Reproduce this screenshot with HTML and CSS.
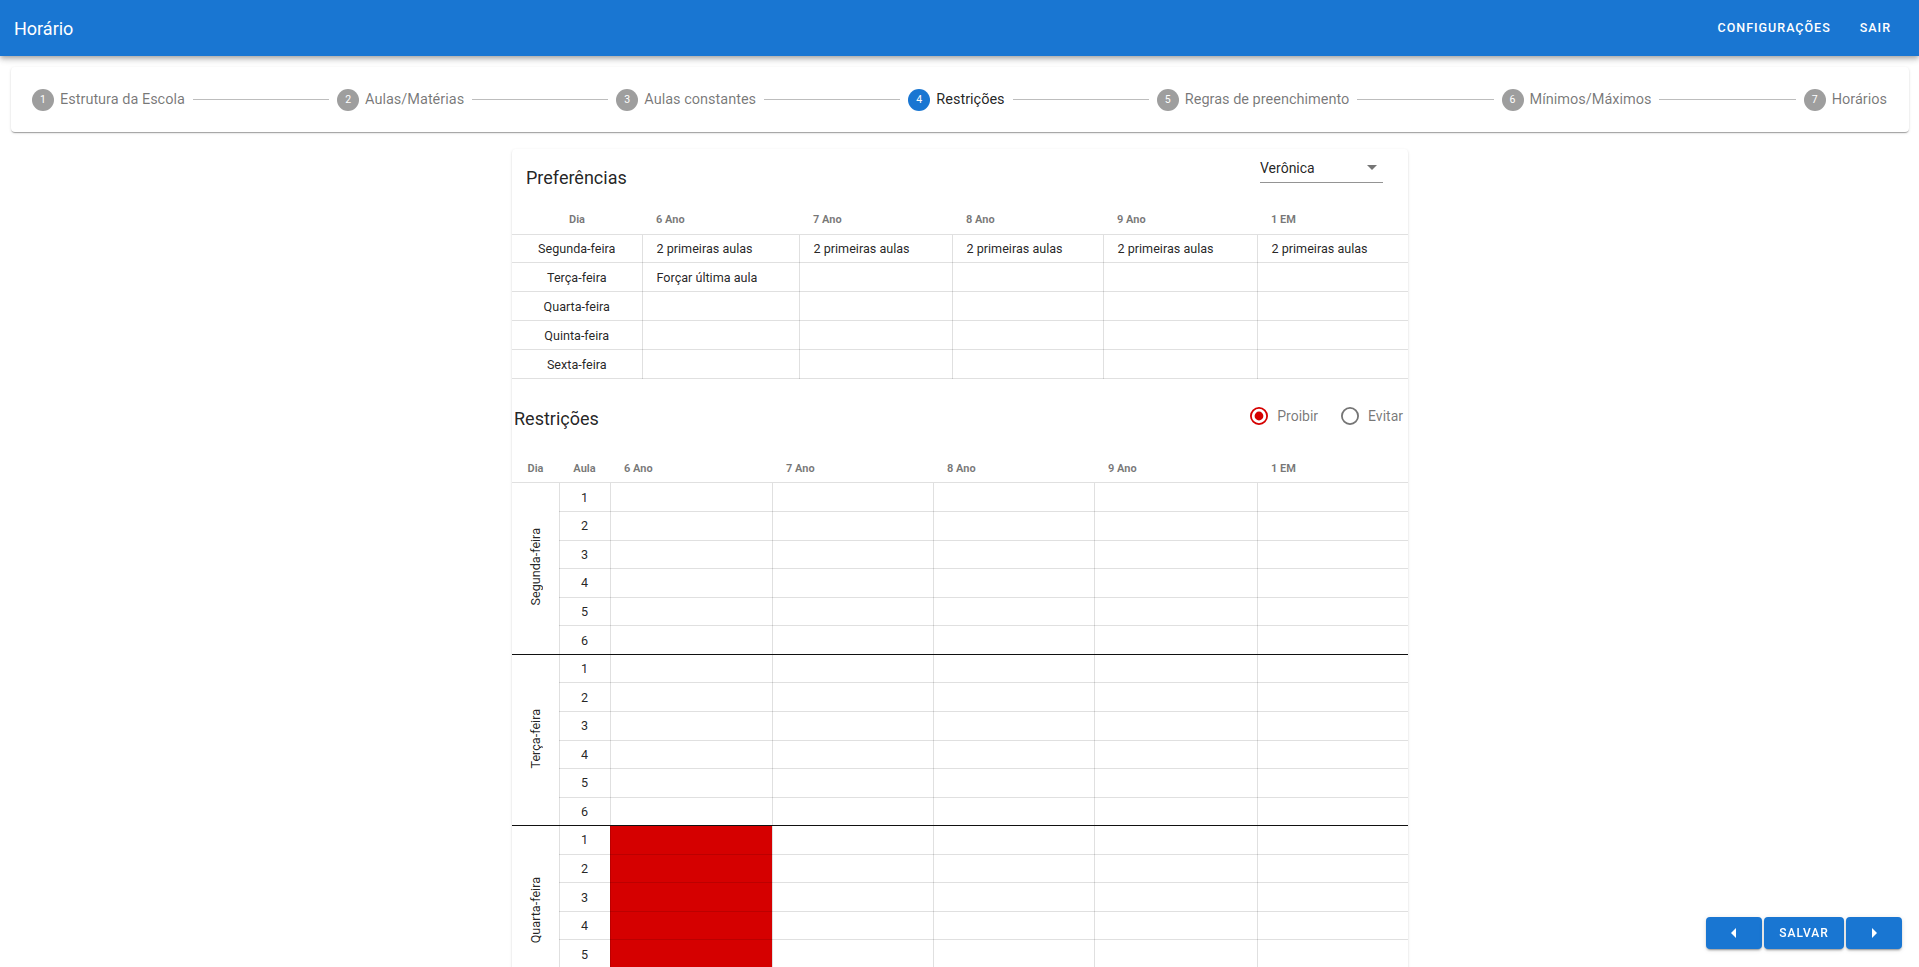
FILE: index.html
```html
<!DOCTYPE html>
<html lang="pt-BR">
<head>
<meta charset="utf-8">
<title>Horário</title>
<link rel="stylesheet" href="styles.css">
</head>
<body>
<header class="appbar">
  <div class="app-title">Horário</div>
  <nav class="app-nav">
    <button class="nav-btn">Configurações</button>
    <button class="nav-btn">Sair</button>
  </nav>
</header>

<main class="page">
  <div class="stepper">
    <div class="step"><span class="step-icon">1</span><span class="step-label">Estrutura da Escola</span></div>
    <div class="connector"></div>
    <div class="step"><span class="step-icon">2</span><span class="step-label">Aulas/Matérias</span></div>
    <div class="connector"></div>
    <div class="step"><span class="step-icon">3</span><span class="step-label">Aulas constantes</span></div>
    <div class="connector"></div>
    <div class="step active"><span class="step-icon">4</span><span class="step-label">Restrições</span></div>
    <div class="connector"></div>
    <div class="step"><span class="step-icon">5</span><span class="step-label">Regras de preenchimento</span></div>
    <div class="connector"></div>
    <div class="step"><span class="step-icon">6</span><span class="step-label">Mínimos/Máximos</span></div>
    <div class="connector"></div>
    <div class="step"><span class="step-icon">7</span><span class="step-label">Horários</span></div>
  </div>

  <section class="card">
    <div class="pref-head">
      <h2 class="section-title">Preferências</h2>
      <div class="select">
        <span class="select-value">Verônica</span>
        <svg class="select-arrow" width="10" height="5" viewBox="0 0 10 5"><path d="M0 0l5 5 5-5z"/></svg>
      </div>
    </div>

    <table class="pref-table">
      <thead>
        <tr>
          <th class="center">Dia</th><th>6 Ano</th><th>7 Ano</th><th>8 Ano</th><th>9 Ano</th><th>1 EM</th>
        </tr>
      </thead>
      <tbody>
        <tr><td class="center">Segunda-feira</td><td>2 primeiras aulas</td><td>2 primeiras aulas</td><td>2 primeiras aulas</td><td>2 primeiras aulas</td><td>2 primeiras aulas</td></tr>
        <tr><td class="center">Terça-feira</td><td>Forçar última aula</td><td></td><td></td><td></td><td></td></tr>
        <tr><td class="center">Quarta-feira</td><td></td><td></td><td></td><td></td><td></td></tr>
        <tr><td class="center">Quinta-feira</td><td></td><td></td><td></td><td></td><td></td></tr>
        <tr><td class="center">Sexta-feira</td><td></td><td></td><td></td><td></td><td></td></tr>
      </tbody>
    </table>

    <div class="restr-head">
      <h2 class="section-title restr-title">Restrições</h2>
      <div class="radios">
        <label class="radio checked">
          <svg width="18" height="18" viewBox="0 0 18 18"><circle cx="9" cy="9" r="8.1" fill="none" stroke="#d50000" stroke-width="1.8"/><circle cx="9" cy="9" r="4.4" fill="#d50000"/></svg>
          <span>Proibir</span>
        </label>
        <label class="radio">
          <svg width="18" height="18" viewBox="0 0 18 18"><circle cx="9" cy="9" r="8.1" fill="none" stroke="#757575" stroke-width="1.8"/></svg>
          <span>Evitar</span>
        </label>
      </div>
    </div>

    <table class="restr-table">
      <thead>
        <tr><th class="center">Dia</th><th class="center">Aula</th><th>6 Ano</th><th>7 Ano</th><th>8 Ano</th><th>9 Ano</th><th>1 EM</th></tr>
      </thead>
      <tbody>
        <tr><td class="day" rowspan="6"><span>Segunda-feira</span></td><td class="num">1</td><td></td><td></td><td></td><td></td><td></td></tr>
        <tr><td class="num">2</td><td></td><td></td><td></td><td></td><td></td></tr>
        <tr><td class="num">3</td><td></td><td></td><td></td><td></td><td></td></tr>
        <tr><td class="num">4</td><td></td><td></td><td></td><td></td><td></td></tr>
        <tr><td class="num">5</td><td></td><td></td><td></td><td></td><td></td></tr>
        <tr class="end"><td class="num">6</td><td></td><td></td><td></td><td></td><td></td></tr>

        <tr><td class="day" rowspan="6"><span>Terça-feira</span></td><td class="num">1</td><td></td><td></td><td></td><td></td><td></td></tr>
        <tr><td class="num">2</td><td></td><td></td><td></td><td></td><td></td></tr>
        <tr><td class="num">3</td><td></td><td></td><td></td><td></td><td></td></tr>
        <tr><td class="num">4</td><td></td><td></td><td></td><td></td><td></td></tr>
        <tr><td class="num">5</td><td></td><td></td><td></td><td></td><td></td></tr>
        <tr class="end"><td class="num">6</td><td></td><td></td><td></td><td></td><td></td></tr>

        <tr><td class="day" rowspan="6"><span>Quarta-feira</span></td><td class="num">1</td><td class="blocked"></td><td></td><td></td><td></td><td></td></tr>
        <tr><td class="num">2</td><td class="blocked"></td><td></td><td></td><td></td><td></td></tr>
        <tr><td class="num">3</td><td class="blocked"></td><td></td><td></td><td></td><td></td></tr>
        <tr><td class="num">4</td><td class="blocked"></td><td></td><td></td><td></td><td></td></tr>
        <tr><td class="num">5</td><td class="blocked"></td><td></td><td></td><td></td><td></td></tr>
        <tr class="end"><td class="num">6</td><td class="blocked"></td><td></td><td></td><td></td><td></td></tr>

        <tr><td class="day" rowspan="6"><span>Quinta-feira</span></td><td class="num">1</td><td></td><td></td><td></td><td></td><td></td></tr>
        <tr><td class="num">2</td><td></td><td></td><td></td><td></td><td></td></tr>
        <tr><td class="num">3</td><td></td><td></td><td></td><td></td><td></td></tr>
        <tr><td class="num">4</td><td></td><td></td><td></td><td></td><td></td></tr>
        <tr><td class="num">5</td><td></td><td></td><td></td><td></td><td></td></tr>
        <tr class="end"><td class="num">6</td><td></td><td></td><td></td><td></td><td></td></tr>

        <tr><td class="day" rowspan="6"><span>Sexta-feira</span></td><td class="num">1</td><td></td><td></td><td></td><td></td><td></td></tr>
        <tr><td class="num">2</td><td></td><td></td><td></td><td></td><td></td></tr>
        <tr><td class="num">3</td><td></td><td></td><td></td><td></td><td></td></tr>
        <tr><td class="num">4</td><td></td><td></td><td></td><td></td><td></td></tr>
        <tr><td class="num">5</td><td></td><td></td><td></td><td></td><td></td></tr>
        <tr class="end"><td class="num">6</td><td></td><td></td><td></td><td></td><td></td></tr>
      </tbody>
    </table>
  </section>
</main>

<div class="fab-group">
  <button class="fab fab-icon" aria-label="Anterior">
    <svg width="24" height="24" viewBox="0 0 24 24"><path d="M14 7l-5 5 5 5V7z" fill="#fff"/></svg>
  </button>
  <button class="fab fab-save">Salvar</button>
  <button class="fab fab-icon" aria-label="Próximo">
    <svg width="24" height="24" viewBox="0 0 24 24"><path d="M10 17l5-5-5-5v10z" fill="#fff"/></svg>
  </button>
</div>
</body>
</html>
```

FILE: styles.css
```css
* { box-sizing: border-box; }

html, body {
  margin: 0;
  padding: 0;
}

body {
  font-family: Roboto, "Noto Sans", "Liberation Sans", Arial, sans-serif;
  color: rgba(0, 0, 0, 0.87);
  background: #fff;
}

/* ---------- App bar ---------- */
.appbar {
  position: relative;
  z-index: 3;
  height: 56px;
  display: flex;
  align-items: center;
  padding: 0 20px 0 14px;
  background: #1976d2;
  color: #fff;
  box-shadow: 0 2px 4px -1px rgba(0,0,0,.2), 0 4px 5px 0 rgba(0,0,0,.14), 0 1px 10px 0 rgba(0,0,0,.12);
}

.app-title {
  flex: 1;
  font-size: 18px;
  font-weight: 400;
}

.app-nav {
  display: flex;
  gap: 13px;
}

.nav-btn {
  background: none;
  border: 0;
  color: #fff;
  font-family: Roboto, "Noto Sans", Arial, sans-serif;
  font-size: 12.5px;
  font-weight: 500;
  letter-spacing: 1px;
  text-transform: uppercase;
  padding: 6px 8px;
  line-height: 20px;
}

/* ---------- Page ---------- */
.page {
  padding: 11px 10px 40px 11px;
}

/* ---------- Stepper ---------- */
.stepper {
  height: 65px;
  display: flex;
  align-items: center;
  padding: 0 14px 0 13px;
  background: #fff;
  border-radius: 4px;
  box-shadow: 0 2px 1px -1px rgba(0,0,0,.2), 0 1px 1px 0 rgba(0,0,0,.14), 0 1px 3px 0 rgba(0,0,0,.12);
}

.step {
  display: flex;
  align-items: center;
  padding: 0 8px;
}

.step-icon {
  width: 22px;
  height: 22px;
  border-radius: 50%;
  background: #9e9e9e;
  color: #fff;
  font-size: 10.5px;
  display: flex;
  align-items: center;
  justify-content: center;
  margin-right: 6px;
}

.step.active .step-icon {
  background: #1976d2;
}

.step-label {
  font-size: 14.5px;
  color: rgba(0, 0, 0, 0.54);
  white-space: nowrap;
}

.step.active .step-label {
  color: rgba(0, 0, 0, 0.87);
  font-weight: 400;
}

.connector {
  flex: 1;
  border-top: 1px solid #bdbdbd;
}

/* ---------- Card ---------- */
.card {
  width: 896px;
  margin: 17px auto 0;
  background: #fff;
  border-radius: 4px;
  box-shadow: 0 2px 1px -1px rgba(0,0,0,.2), 0 1px 1px 0 rgba(0,0,0,.14), 0 1px 3px 0 rgba(0,0,0,.12);
}

.pref-head {
  height: 56px;
  display: flex;
  justify-content: space-between;
  align-items: flex-start;
  padding: 0 25px 0 14px;
}

.section-title {
  margin: 17px 0 0;
  font-size: 18px;
  font-weight: 400;
  line-height: 24px;
}

.select {
  margin-top: 1px;
  width: 123px;
  height: 33px;
  display: flex;
  align-items: flex-end;
  justify-content: space-between;
  padding-bottom: 6px;
  border-bottom: 1px solid rgba(0, 0, 0, 0.42);
  font-size: 14px;
  line-height: 16px;
}

.select-arrow {
  fill: rgba(0, 0, 0, 0.54);
  margin: 0 6px 6px 0;
}

/* ---------- Tables ---------- */
table {
  width: 100%;
  border-collapse: collapse;
  table-layout: fixed;
}

th {
  height: 29px;
  padding: 0 0 0 14px;
  text-align: left;
  font-size: 11px;
  font-weight: 700;
  color: rgba(0, 0, 0, 0.54);
  border-bottom: 1px solid rgba(0, 0, 0, 0.12);
  vertical-align: middle;
}

td {
  padding: 0 0 0 14px;
  font-size: 12.6px;
  vertical-align: middle;
  border-bottom: 1px solid rgba(0, 0, 0, 0.12);
  border-right: 1px solid rgba(0, 0, 0, 0.12);
  white-space: nowrap;
}

td:last-child { border-right: 0; }

th.center, td.center {
  text-align: center;
  padding: 0;
}

.pref-table td { height: 28.9px; }

.pref-table th:nth-child(1) { width: 130px; }
.pref-table th:nth-child(2) { width: 157px; }
.pref-table th:nth-child(3) { width: 153px; }
.pref-table th:nth-child(4) { width: 151px; }
.pref-table th:nth-child(5) { width: 154px; }
.pref-table th:nth-child(6) { width: 151px; }

/* Restrições */
.restr-head {
  height: 75px;
  display: flex;
  align-items: center;
  justify-content: space-between;
  padding: 0 5px 0 2px;
}

.restr-title {
  margin: 5px 0 0;
}

.radios {
  display: flex;
  gap: 23px;
}

.radio {
  display: flex;
  align-items: center;
  gap: 9px;
  font-size: 14px;
  color: rgba(0, 0, 0, 0.54);
}

.radio svg { display: block; }

.restr-table th:nth-child(1) { width: 47px; }
.restr-table th:nth-child(2) { width: 51px; }
.restr-table th:nth-child(3) { width: 162px; }
.restr-table th:nth-child(4) { width: 161px; }
.restr-table th:nth-child(5) { width: 161px; }
.restr-table th:nth-child(6) { width: 163px; }
.restr-table th:nth-child(7) { width: 151px; }

.restr-table td { height: 28.57px; }

.restr-table td.num {
  text-align: center;
  padding: 0;
}

.restr-table td.day {
  text-align: center;
  padding: 0;
  border-bottom: 1px solid #111;
}

.restr-table td.day span {
  display: inline-block;
  writing-mode: vertical-rl;
  transform: rotate(180deg);
}

.restr-table tr.end td {
  border-bottom: 1px solid #111;
}

.restr-table td.blocked {
  background: #d50000;
}

/* ---------- Floating buttons ---------- */
.fab-group {
  position: fixed;
  right: 17px;
  bottom: 18px;
  display: flex;
  gap: 2px;
  z-index: 5;
}

.fab {
  height: 32px;
  border: 0;
  border-radius: 4px;
  background: #1976d2;
  color: #fff;
  font-family: Roboto, "Noto Sans", Arial, sans-serif;
  font-size: 12px;
  font-weight: 500;
  letter-spacing: 1px;
  text-transform: uppercase;
  display: flex;
  align-items: center;
  justify-content: center;
  padding: 0;
  box-shadow: 0 3px 1px -2px rgba(0,0,0,.2), 0 2px 2px 0 rgba(0,0,0,.14), 0 1px 5px 0 rgba(0,0,0,.12);
}

.fab-icon { width: 56px; }
.fab-save { width: 80px; }
.fab svg { display: block; }
```
